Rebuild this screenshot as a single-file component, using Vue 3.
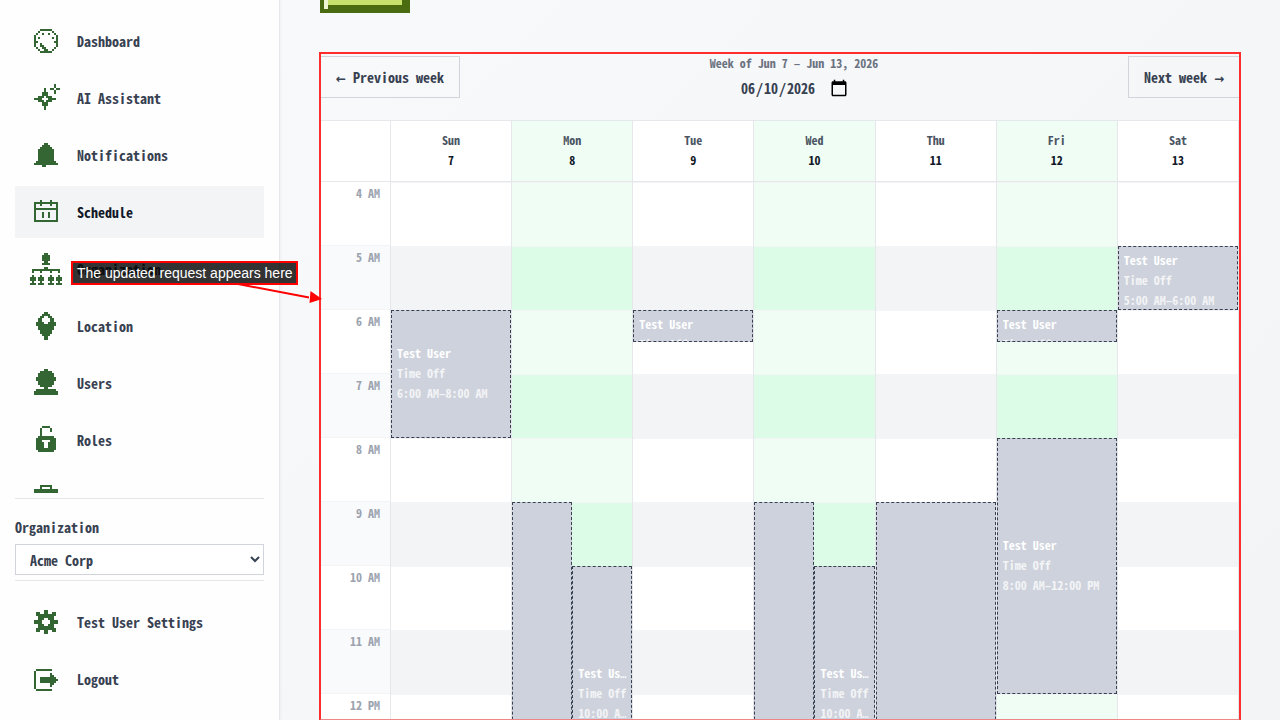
<script setup>
import { ref } from 'vue'

// Each icon is a bitmap on a 16-column grid; `top` is the first painted row.
const bitmaps = {
  dashboard: { top: 2, rows: [
    '.....######.....',
    '....#......#....',
    '...#..#..#..#...',
    '..#..........#..',
    '..#.#......#.#..',
    '..#..........#..',
    '..##........##..',
    '..#..#.......#..',
    '..#..##......#..',
    '...#..##....#...',
    '....#..##..#....',
    '.....######.....',
  ] },
  assistant: { top: 1, rows: [
    '............#...',
    '............#...',
    '.......#..##.##.',
    '.......#....#...',
    '......###...#...',
    '......###.......',
    '....###.###.....',
    '..####...####...',
    '....###.###.....',
    '......###.......',
    '......###.......',
    '.......#........',
    '.......#........',
  ] },
  bell: { top: 2, rows: [
    '.......##.......',
    '......####......',
    '.....######.....',
    '....########....',
    '....########....',
    '....########....',
    '....########....',
    '....########....',
    '....########....',
    '...##########...',
    '..############..',
    '......##........',
  ] },
  calendar: { top: 2, rows: [
    '.....#....#.....',
    '..############..',
    '..#..#....#..#..',
    '..#..........#..',
    '..############..',
    '..#..........#..',
    '..#...#..#...#..',
    '..#...#..#...#..',
    '..#...#..#...#..',
    '..#..........#..',
    '..############..',
  ] },
  organization: { top: 0, rows: [
    '.......##.......',
    '......####......',
    '......####......',
    '......####......',
    '.......##.......',
    '......####......',
    '................',
    '.......##.......',
    '.##############.',
    '.#...#....#...#.',
    '................',
    '.#...#....#...#.',
    '###.###..###.###',
    '###.###..###.###',
    '.#...#....#...#.',
    '###.###..###.###',
  ] },
  pin: { top: 1, rows: [
    '.......##.......',
    '......####......',
    '.....##..##.....',
    '....##....##....',
    '....##....##....',
    '...####..####...',
    '...##########...',
    '....########....',
    '....########....',
    '.....######.....',
    '.....######.....',
    '......####......',
    '.......##.......',
    '.......##.......',
  ] },
  user: { top: 1, rows: [
    '.......##.......',
    '.....######.....',
    '....########....',
    '....########....',
    '...##########...',
    '...##########...',
    '....########....',
    '....########....',
    '.....######.....',
    '.......##.......',
    '...##########...',
    '..############..',
    '..############..',
  ] },
  lock: { top: 1, rows: [
    '......####......',
    '.....#....#.....',
    '.....#....#.....',
    '.....#..........',
    '.....#..........',
    '....########....',
    '...##########...',
    '...###....###...',
    '...####..####...',
    '...####..####...',
    '...####..####...',
    '...##########...',
    '....########....',
  ] },
  briefcase: { top: 2, rows: [
    '.....######.....',
    '.....#....#.....',
    '..############..',
    '..############..',
    '..############..',
    '..############..',
    '..############..',
    '..############..',
    '..############..',
  ] },
  gear: { top: 2, rows: [
    '.......##.......',
    '...##..##..##...',
    '...##########...',
    '....########....',
    '....###..###....',
    '..####....####..',
    '..####....####..',
    '....###..###....',
    '....########....',
    '...##########...',
    '...##..##..##...',
    '.......##.......',
  ] },
  logout: { top: 3, rows: [
    '...########.....',
    '..#.............',
    '..#.......#.....',
    '..#.......##....',
    '..#..########...',
    '..#..#########..',
    '..#..########...',
    '..#.......##....',
    '..#.......#.....',
    '..#.............',
    '...########.....',
  ] },
}

function iconPath(name) {
  const { top, rows } = bitmaps[name]
  let d = ''
  rows.forEach((row, y) => {
    for (const run of row.matchAll(/#+/g)) {
      d += `M${run.index} ${top + y}h${run[0].length}v1h-${run[0].length}z`
    }
  })
  return d
}

const nav = [
  { label: 'Dashboard', icon: 'dashboard' },
  { label: 'AI Assistant', icon: 'assistant' },
  { label: 'Notifications', icon: 'bell' },
  { label: 'Schedule', icon: 'calendar', active: true },
  { label: 'Organization', icon: 'organization' },
  { label: 'Location', icon: 'pin' },
  { label: 'Users', icon: 'user' },
  { label: 'Roles', icon: 'lock' },
  { label: '', icon: 'briefcase' },
]
const account = [
  { label: 'Test User Settings', icon: 'gear' },
  { label: 'Logout', icon: 'logout' },
]

const organization = ref('Acme Corp')
const date = ref('2026-06-10')

const firstHour = 4
const hourHeight = 64
const hours = Array.from({ length: 9 }, (_, i) => {
  const h = firstHour + i
  return `${h > 12 ? h - 12 : h} ${h < 12 ? 'AM' : 'PM'}`
})

const off = (start, end, time, lane = 0, lanes = 1) => ({ start, end, time, lane, lanes })
const days = [
  { name: 'Sun', num: 7, events: [off(6, 8, '6:00 AM–8:00 AM')] },
  { name: 'Mon', num: 8, open: true, events: [
    off(9, 17, '9:00 AM–5:00 PM', 0, 2),
    off(10, 14, '10:00 AM–2:00 PM', 1, 2),
  ] },
  { name: 'Tue', num: 9, events: [off(6, 6.5, '6:00 AM–6:30 AM')] },
  { name: 'Wed', num: 10, open: true, events: [
    off(9, 17, '9:00 AM–5:00 PM', 0, 2),
    off(10, 14, '10:00 AM–2:00 PM', 1, 2),
  ] },
  { name: 'Thu', num: 11, events: [off(9, 17, '9:00 AM–5:00 PM')] },
  { name: 'Fri', num: 12, open: true, events: [
    off(6, 6.5, '6:00 AM–6:30 AM'),
    off(8, 12, '8:00 AM–12:00 PM'),
  ] },
  { name: 'Sat', num: 13, events: [off(5, 6, '5:00 AM–6:00 AM')] },
]

function eventStyle(e) {
  return {
    top: `${(e.start - firstHour) * hourHeight}px`,
    height: `${(e.end - e.start) * hourHeight}px`,
    left: `${(e.lane / e.lanes) * 100}%`,
    width: `${100 / e.lanes}%`,
  }
}
</script>

<template>
  <div class="app">
    <aside class="sidebar">
      <nav class="nav">
        <a v-for="item in nav" :key="item.icon" href="#" class="item" :class="{ active: item.active }">
          <svg class="icon" viewBox="0 0 16 16" aria-hidden="true"><path :d="iconPath(item.icon)" /></svg>
          <span>{{ item.label }}</span>
        </a>
      </nav>
      <div class="org">
        <label for="org">Organization</label>
        <select id="org" v-model="organization">
          <option>Acme Corp</option>
        </select>
      </div>
      <div class="account">
        <a v-for="item in account" :key="item.icon" href="#" class="item">
          <svg class="icon" viewBox="0 0 16 16" aria-hidden="true"><path :d="iconPath(item.icon)" /></svg>
          <span>{{ item.label }}</span>
        </a>
      </div>
    </aside>

    <main class="main">
      <button type="button" class="pixel-button"></button>

      <section class="schedule">
        <div class="toolbar">
          <button type="button" class="week-button"><span class="arrow">←</span> Previous week</button>
          <div class="week">
            <label for="date">Week of Jun 7 – Jun 13, 2026</label>
            <input id="date" v-model="date" type="date" />
          </div>
          <button type="button" class="week-button">Next week <span class="arrow">→</span></button>
        </div>

        <div class="calendar">
          <div class="times">
            <div class="head"></div>
            <div v-for="h in hours" :key="h" class="time">{{ h }}</div>
          </div>
          <div v-for="d in days" :key="d.name" class="day" :class="{ open: d.open }">
            <div class="head">
              <span class="day-name">{{ d.name }}</span>
              <span class="day-num">{{ d.num }}</span>
            </div>
            <div class="slots">
              <div v-for="h in hours" :key="h" class="slot"></div>
              <article v-for="e in d.events" :key="e.time" class="event" :style="eventStyle(e)">
                <div class="line title"><span>Test User</span></div>
                <div class="line"><span>Time Off</span></div>
                <div class="line"><span>{{ e.time }}</span></div>
              </article>
            </div>
          </div>
        </div>
      </section>
    </main>

    <div class="callout">The updated request appears here</div>
    <svg class="pointer" viewBox="0 0 90 24" aria-hidden="true">
      <path d="M5 2 76 15.500" fill="none" stroke="#f00" stroke-width="2" />
      <path d="M77.500 9 89 17 76.500 21z" fill="#f00" />
    </svg>
  </div>
</template>

<style>
body {
  margin: 0;
}
</style>

<style scoped>
.app {
  --mono: "Noto Sans Mono CJK SC", "Noto Sans Mono CJK JP", "Liberation Mono", monospace;
  position: relative;
  display: flex;
  height: 100vh;
  overflow: hidden;
  background: linear-gradient(135deg, #f9fafb, #f3f4f6);
  color: #374151;
  font: 700 14px/20px var(--mono);
}
.app *,
.app *::after {
  box-sizing: border-box;
}
button,
select,
input {
  font: inherit;
  color: inherit;
}

.sidebar {
  display: flex;
  flex: 0 0 280px;
  flex-direction: column;
  padding: 0 15px;
  background: #fefefe;
  border-right: 1px solid #e5e7eb;
  box-shadow: 0 0 4px rgba(0, 0, 0, 0.06);
}
.nav {
  display: flex;
  flex: 1;
  flex-direction: column;
  gap: 5px;
  min-height: 0;
  margin-bottom: 5px;
  padding-top: 15px;
  overflow: hidden;
}
.item {
  display: flex;
  flex: 0 0 52px;
  align-items: center;
  gap: 15px;
  padding: 0 15px;
  color: #374151;
  text-decoration: none;
}
.item.active {
  background: #f3f4f6;
  color: #111827;
}
.icon {
  width: 32px;
  height: 32px;
  fill: #336633;
  shape-rendering: crispEdges;
}
.org {
  display: flex;
  flex-direction: column;
  gap: 7px;
  padding: 18px 0 5px;
  border: solid #e5e7eb;
  border-width: 1px 0;
}
.org select {
  width: 100%;
  height: 31px;
  padding: 0 0 0 10px;
  background: #fff;
  border: 1px solid #d1d5db;
  border-radius: 0;
}
.account {
  display: flex;
  flex-direction: column;
  gap: 5px;
  padding: 15px 0;
}

.main {
  display: flex;
  flex: 1;
  flex-direction: column;
  min-width: 0;
  padding: 0 40px;
}
.pixel-button {
  flex: none;
  align-self: flex-start;
  width: 90px;
  height: 40px;
  margin: -27px 0 40px;
  background: #c8e06c;
  border: 4px solid #4a6b10;
  box-shadow: inset 4px 0 #eef7cf, inset -4px -4px #4a6b10;
}
.schedule {
  position: relative;
  flex: 1;
  min-height: 0;
}
.schedule::after {
  position: absolute;
  inset: -1px;
  border: 2px solid #ff2d2d;
  border-bottom-color: #f08585;
  content: "";
  pointer-events: none;
}
.toolbar {
  display: flex;
  align-items: flex-end;
  justify-content: space-between;
  margin-bottom: 22px;
}
.week-button {
  height: 42px;
  padding: 0 15px;
  background: transparent;
  border: 1px solid #d1d5db;
}
.arrow {
  font: 700 12px/16px "DejaVu Sans", sans-serif;
}
.week {
  display: flex;
  flex-direction: column;
  align-items: center;
  gap: 5px;
}
.week label {
  color: #6b7280;
  font-size: 12px;
}
.week input {
  height: 20px;
  padding: 0;
  background: transparent;
  border: 0;
}
.week input::-webkit-calendar-picker-indicator {
  width: 18px;
  height: 18px;
  padding: 0;
  background-size: 18px 18px;
}

.calendar {
  display: grid;
  grid-template-columns: 70px repeat(7, minmax(0, 1fr));
  height: calc(100% - 67px);
  overflow: hidden;
  background: #fff;
  border: 1px solid #e5e7eb;
  border-bottom: 0;
}
.times,
.day {
  border-right: 1px solid #e5e7eb;
}
.head {
  display: flex;
  flex-direction: column;
  align-items: center;
  height: 61px;
  padding-top: 9px;
  border-bottom: 1px solid #e5e7eb;
  font-size: 12px;
}
.day-name {
  color: #4b5563;
}
.day-num {
  color: #111827;
}
.time {
  height: 64px;
  padding: 1px 10px 0 0;
  border-bottom: 1px solid #f3f4f6;
  color: #9ca3af;
  font-size: 12px;
  text-align: right;
}
.time:nth-child(odd) {
  background: #f9fafb;
}
.slots {
  position: relative;
}
.slot {
  height: 64px;
  border-top: 1px solid #f3f4f6;
}
.slot:nth-child(even) {
  background: #f3f4f6;
}
.open .head,
.open .slot {
  background: #f0fdf4;
}
.open .slot:nth-child(even) {
  background: #dcfce7;
}
.event {
  position: absolute;
  display: flex;
  flex-direction: column;
  justify-content: safe center;
  padding: 3px 4px 5px 5px;
  overflow: hidden;
  background: #ced2dc;
  border: 1px dashed #374151;
  color: #f3f4f6;
}
/* The line's own font draws only the ellipsis; the text is set on the span. */
.line {
  flex: none;
  height: 20px;
  overflow: hidden;
  font: 700 10px/20px "Liberation Mono", monospace;
  text-overflow: ellipsis;
  white-space: nowrap;
}
.line span {
  font-family: var(--mono);
  font-size: 12px;
}
.title {
  color: #fff;
}

.callout {
  position: absolute;
  top: 261px;
  left: 71px;
  padding: 0 3px 0 4px;
  background: rgba(0, 0, 0, 0.8);
  border: 2px solid #f00;
  color: #fff;
  font: 14px/20px "Liberation Sans", Arial, sans-serif;
}
.pointer {
  position: absolute;
  top: 282px;
  left: 233px;
  width: 90px;
  height: 24px;
}
</style>
